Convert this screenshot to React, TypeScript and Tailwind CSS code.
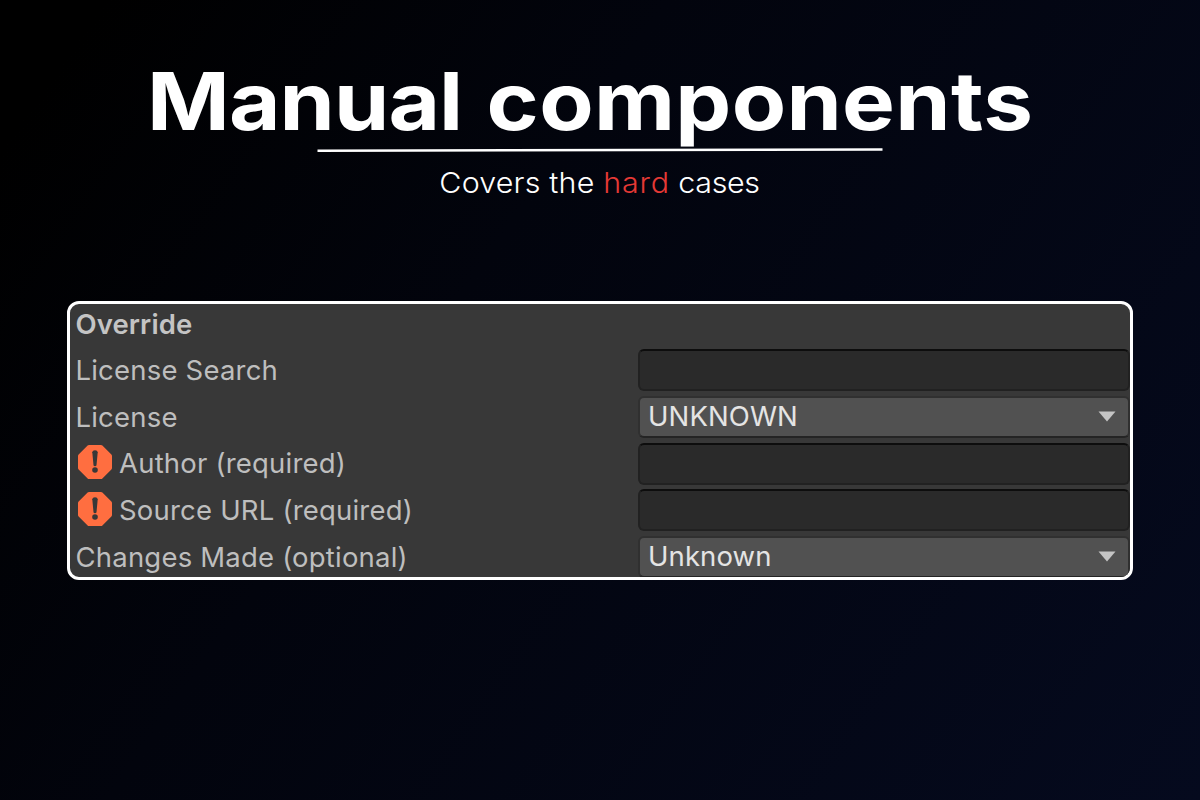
import type { ReactNode } from "react"

interface FieldRowProps {
  label: string
  warning?: boolean
  children?: ReactNode
}

function WarningIcon() {
  return (
    <svg viewBox="0 0 34 34" className="w-[34px] h-[34px] shrink-0 -translate-y-0.5">
      <path
        d="M11 0h12a2 2 0 0 1 1.400.6l9 9A2 2 0 0 1 34 11v12a2 2 0 0 1-.6 1.400l-9 9a2 2 0 0 1-1.400.6H11a2 2 0 0 1-1.400-.6l-9-9A2 2 0 0 1 0 23V11a2 2 0 0 1 .6-1.400l9-9A2 2 0 0 1 11 0z"
        fill="#ff6e40"
      />
      <path d="M14.300 7.300Q14.300 5.300 17 5.300T19.700 7.300L18.500 20.200Q18.300 21.300 17 21.300T15.500 20.200Z" fill="#383838" />
      <circle cx="17" cy="25" r="2.800" fill="#383838" />
    </svg>
  )
}

function FieldRow({ label, warning, children }: FieldRowProps) {
  return (
    <div className="flex items-center h-[46.6px]">
      <div className="flex items-center w-[568px] shrink-0 pl-[5.500px] whitespace-nowrap">
        {warning && (
          <span className="pl-0.5 pr-[7.500px]">
            <WarningIcon />
          </span>
        )}
        <span className="text-[27.5px] leading-none tracking-[0.2px] text-[#bebebe]">{label}</span>
      </div>
      {children}
    </div>
  )
}

function TextField() {
  return (
    <div className="w-[492px] h-[42px] mb-px rounded-[6px] border-2 border-[#212121] border-t-[#0d0d0d] bg-[#2a2a2a]" />
  )
}

function Dropdown({ value }: { value: string }) {
  return (
    <div className="flex items-center justify-between w-[492px] h-[42px] mb-px rounded-[6px] border-2 border-[#303030] border-b-[#242424] bg-[#515151] pl-2 pr-3">
      <span className="text-[27.5px] leading-none tracking-[0.1px] text-[#e4e4e4] -translate-y-[0.5px]">{value}</span>
      <svg viewBox="0 0 18 11" className="w-[18px] h-[11px]">
        <path d="M0.500 0.500h17L9 10.500z" fill="#c4c4c4" />
      </svg>
    </div>
  )
}

export default function App() {
  return (
    <div className="w-[1200px] h-[800px] overflow-hidden flex flex-col items-center bg-[linear-gradient(125deg,#000_6%,#02040d_38%,#050a1e_100%)] font-['Inter',sans-serif]">
      {/* Header */}
      <header className="flex flex-col items-center pt-[52px] h-[301px] shrink-0 text-white">
        <h1 className="text-[80px] leading-[98px] font-bold whitespace-nowrap -translate-x-[10px] scale-x-[1.11]">
          <span className="tracking-[-0.8px] mr-[3px]">Manual</span> <span className="tracking-[0.3px]">components</span>
        </h1>
        <svg viewBox="0 0 566 4" className="w-[566px] h-1 -mt-0.5">
          <path d="M0.500 2.700L565.500 1.500" stroke="#fff" strokeWidth="2.400" />
        </svg>
        <p className="mt-[13px] text-[29px] leading-[36px] font-light whitespace-nowrap scale-x-[1.05]">
          <span className="tracking-[0.15px]">Covers the </span>
          <span className="tracking-[0.8px] text-[#e53935]">hard</span>
          <span className="tracking-[-0.3px]"> cases</span>
        </p>
      </header>

      {/* Component inspector */}
      <section className="w-[1066px] h-[279px] shrink-0 overflow-hidden rounded-[12px] border-3 border-white bg-[#383838]">
        <div className="-mt-[3px]">
          <h2 className="flex items-center h-[46.6px] pl-[5.500px] text-[27.5px] leading-none font-semibold tracking-[0.1px] text-[#c4c4c4]">
            Override
          </h2>
          <FieldRow label="License Search">
            <TextField />
          </FieldRow>
          <FieldRow label="License">
            <Dropdown value="UNKNOWN" />
          </FieldRow>
          <FieldRow label="Author (required)" warning>
            <TextField />
          </FieldRow>
          <FieldRow label="Source URL (required)" warning>
            <TextField />
          </FieldRow>
          <FieldRow label="Changes Made (optional)">
            <Dropdown value="Unknown" />
          </FieldRow>
        </div>
      </section>
    </div>
  )
}
